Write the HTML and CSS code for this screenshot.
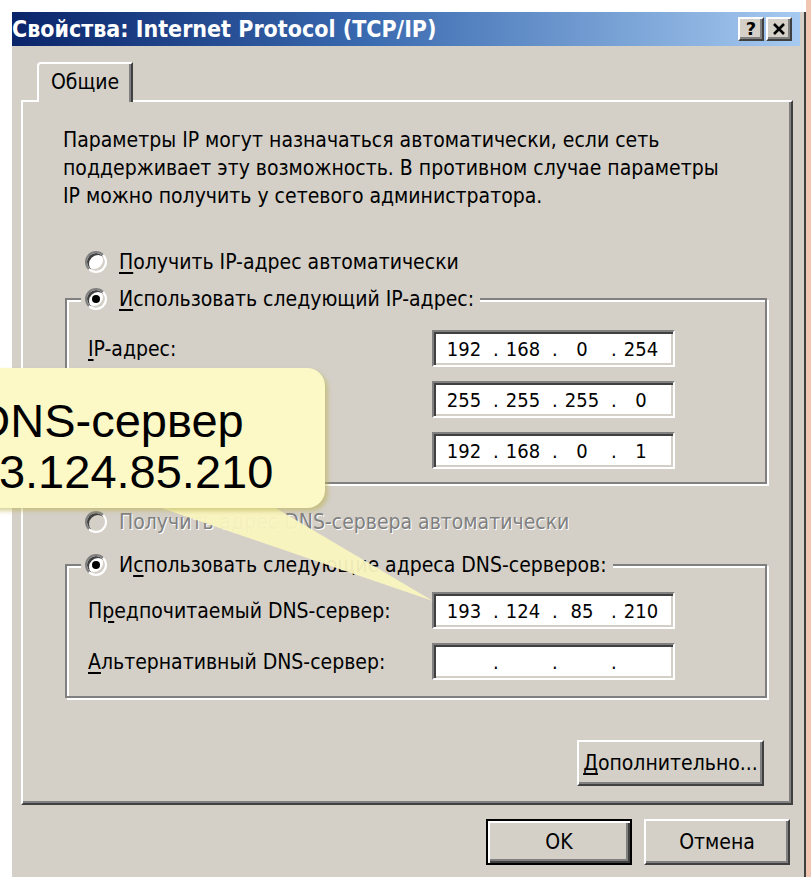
FILE: index.html
```html
<!DOCTYPE html>
<html lang="ru">
<head>
<meta charset="utf-8">
<title>Свойства: Internet Protocol (TCP/IP)</title>
<link rel="stylesheet" href="styles.css">
</head>
<body>
<div class="screen">
  <div class="stage">
    <div class="dialog">
      <div class="titlebar">
        <span class="title">Свойства: Internet Protocol (TCP/IP)</span>
        <div class="caption-buttons">
          <span class="cap-btn help">?</span>
          <span class="cap-btn">
            <svg width="14" height="12" viewBox="0 0 14 12"><path d="M2 1 L12 11 M12 1 L2 11" stroke="#000" stroke-width="2.6" fill="none"/></svg>
          </span>
        </div>
      </div>

      <div class="client">
        <div class="tabs"><div class="tab">Общие</div></div>
        <div class="panel">
          <p class="intro">Параметры IP могут назначаться автоматически, если сеть<br>поддерживает эту возможность. В противном случае параметры<br>IP можно получить у сетевого администратора.</p>

          <div class="option first-option"><span class="radio"></span><span><u>П</u>олучить IP-адрес автоматически</span></div>

          <div class="group group-ip">
            <div class="option legend"><span class="radio checked"></span><span><u>И</u>спользовать следующий IP-адрес:</span></div>
            <div class="fields">
              <div class="field-label"><u>I</u>P-адрес:</div>
              <div class="ip"><span class="oct">192</span><span class="dot">.</span><span class="oct">168</span><span class="dot">.</span><span class="oct">0</span><span class="dot">.</span><span class="oct">254</span></div>
              <div class="field-label"><u>М</u>аска подсети:</div>
              <div class="ip"><span class="oct">255</span><span class="dot">.</span><span class="oct">255</span><span class="dot">.</span><span class="oct">255</span><span class="dot">.</span><span class="oct">0</span></div>
              <div class="field-label"><u>О</u>сновной шлюз:</div>
              <div class="ip"><span class="oct">192</span><span class="dot">.</span><span class="oct">168</span><span class="dot">.</span><span class="oct">0</span><span class="dot">.</span><span class="oct">1</span></div>
            </div>
          </div>

          <div class="option disabled"><span class="radio"></span><span>Получить адрес DNS-сервера автоматически</span></div>

          <div class="group group-dns">
            <div class="option legend"><span class="radio checked"></span><span>И<u>с</u>пользовать следующие адреса DNS-серверов:</span></div>
            <div class="fields">
              <div class="field-label">П<u>р</u>едпочитаемый DNS-сервер:</div>
              <div class="ip"><span class="oct">193</span><span class="dot">.</span><span class="oct">124</span><span class="dot">.</span><span class="oct">85</span><span class="dot">.</span><span class="oct">210</span></div>
              <div class="field-label"><u>А</u>льтернативный DNS-сервер:</div>
              <div class="ip"><span class="oct"></span><span class="dot">.</span><span class="oct"></span><span class="dot">.</span><span class="oct"></span><span class="dot">.</span><span class="oct"></span></div>
            </div>
          </div>

          <div class="advanced-row"><button class="btn advanced"><u>Д</u>ополнительно...</button></div>
        </div>

        <div class="footer">
          <button class="btn default">OK</button>
          <button class="btn">Отмена</button>
        </div>
      </div>
    </div>
  </div>
  <div class="edge"></div>

  <svg class="callout-tail" width="811" height="877" viewBox="0 0 811 877">
    <polygon points="138,500 262,500 433,601" />
  </svg>
  <div class="callout">DNS-сервер<br>193.124.85.210</div>
</div>
</body>
</html>
```

FILE: styles.css
```css
* {
  box-sizing: border-box;
}

html,
body {
  margin: 0;
}

body {
  background: #fff;
  color: #000;
  font-family: "DejaVu Sans Condensed", "DejaVu Sans", sans-serif;
  font-size: 21px;
}

.screen {
  position: relative;
  display: grid;
  grid-template-columns: 806px 5px;
  width: 811px;
  height: 877px;
  overflow: hidden;
}

.stage {
  padding: 12px 0 0 10px;
}

.edge {
  background: #f2c4b2;
}

/* window frame */
.dialog {
  min-height: 900px;
  background: #d4d0c8;
  border-left: 2px solid #fff;
  border-right: 2px solid #404040;
  padding-right: 4px;
}

.titlebar {
  height: 34px;
  display: flex;
  align-items: center;
  justify-content: space-between;
  padding-right: 8px;
  background: linear-gradient(to right, #0a246a 0%, #3a6ab0 45%, #a6caf0 100%);
}

.title {
  color: #fff;
  font-weight: bold;
  font-size: 23px;
  white-space: nowrap;
}

.caption-buttons {
  display: flex;
  gap: 2px;
}

.cap-btn {
  width: 26px;
  height: 24px;
  display: flex;
  align-items: center;
  justify-content: center;
  background: #d4d0c8;
  border: 2px solid;
  border-color: #fff #404040 #404040 #fff;
  box-shadow: inset -2px -2px 0 #808080;
  font-family: "DejaVu Sans", sans-serif;
  font-weight: bold;
  font-size: 18px;
  line-height: 1;
}

.client {
  padding: 16px 7px 0 9px;
}

/* tab strip */
.tabs {
  display: flex;
  padding-left: 16px;
  margin-bottom: -2px;
  position: relative;
  z-index: 1;
}

.tab {
  width: 96px;
  height: 40px;
  display: flex;
  align-items: center;
  justify-content: center;
  padding-bottom: 2px;
  background: #d4d0c8;
  border: 2px solid;
  border-bottom: 0;
  border-color: #fff #404040 transparent #fff;
  border-top-left-radius: 4px;
  box-shadow: inset -2px 0 0 #808080;
}

.panel {
  border: 2px solid;
  border-color: #fff #404040 #404040 #fff;
  box-shadow: inset -2px -2px 0 #808080;
  padding: 24px 24px 17px 40px;
}

.intro {
  margin: 0;
  line-height: 28px;
}

u {
  text-decoration-thickness: 2px;
  text-underline-offset: 3px;
}

/* radio options */
.option {
  display: flex;
  align-items: center;
  gap: 12px;
  height: 28px;
  line-height: 28px;
  white-space: nowrap;
}

.first-option {
  margin: 38px 0 0 22px;
}

.option.disabled {
  margin: 24px 0 0 22px;
  color: #808080;
  text-shadow: 1px 1px 0 #fff;
}

.radio {
  position: relative;
  flex: none;
  width: 22px;
  height: 22px;
  border-radius: 50%;
  background: #fff;
  border: 2px solid;
  border-color: #808080 #fff #fff #808080;
  box-shadow: inset 2px 2px 0 #404040, inset -2px -2px 0 #d4d0c8;
}

.radio.checked::after {
  content: "";
  position: absolute;
  left: 5px;
  top: 5px;
  width: 8px;
  height: 8px;
  border-radius: 50%;
  background: #000;
}

.disabled .radio {
  background: #d4d0c8;
}

/* etched group boxes */
.group {
  margin: 22px 0 0 2px;
  border: 2px solid #808080;
  box-shadow: inset 2px 2px 0 #fff, 2px 2px 0 #fff;
}

.group-dns {
  margin-top: 28px;
}

.legend {
  width: fit-content;
  margin: -15px 0 0 14px;
  padding: 0 6px 0 4px;
  background: #d4d0c8;
}

.fields {
  display: grid;
  grid-template-columns: 344px 243px;
  row-gap: 14px;
  align-items: center;
  padding: 17px 0 13px 21px;
}

.group-dns .fields {
  padding: 13px 0 16px 21px;
}

.field-label {
  white-space: nowrap;
}

/* sunken IP address control */
.ip {
  height: 37px;
  display: flex;
  align-items: center;
  padding-left: 7px;
  font-size: 20px;
  background: #fff;
  border: 2px solid;
  border-color: #808080 #fff #fff #808080;
  box-shadow: inset 2px 2px 0 #404040, inset -2px -2px 0 #d4d0c8;
}

.oct {
  width: 46px;
  text-align: center;
}

.dot {
  width: 13px;
  padding-left: 6px;
}

/* push buttons */
.btn {
  font: inherit;
  color: #000;
  background: #d4d0c8;
  border: 2px solid;
  border-color: #fff #404040 #404040 #fff;
  box-shadow: inset -2px -2px 0 #808080;
  height: 46px;
  padding: 0;
}

.advanced-row {
  display: flex;
  justify-content: flex-end;
  margin: 42px 3px 0 0;
}

.advanced {
  width: 187px;
}

.footer {
  display: flex;
  justify-content: flex-end;
  gap: 12px;
  padding: 14px 3px 0 0;
}

.footer .btn {
  width: 146px;
}

.btn.default {
  border-color: #000;
  box-shadow: inset 2px 2px 0 #fff, inset -2px -2px 0 #404040, inset -4px -4px 0 #808080;
}

/* yellow annotation balloon */
.callout-tail {
  position: absolute;
  left: 0;
  top: 0;
  pointer-events: none;
}

.callout-tail polygon {
  fill: #faf6c0;
  opacity: 0.95;
}

.callout {
  position: absolute;
  left: -105px;
  top: 368px;
  width: 430px;
  height: 140px;
  padding-top: 27px;
  border-radius: 18px;
  background: #fcf9c6;
  box-shadow: 3px 3px 4px rgba(190, 180, 90, 0.6);
  font-family: "Liberation Sans", Arial, sans-serif;
  font-size: 47px;
  line-height: 51px;
  text-align: center;
}
```
